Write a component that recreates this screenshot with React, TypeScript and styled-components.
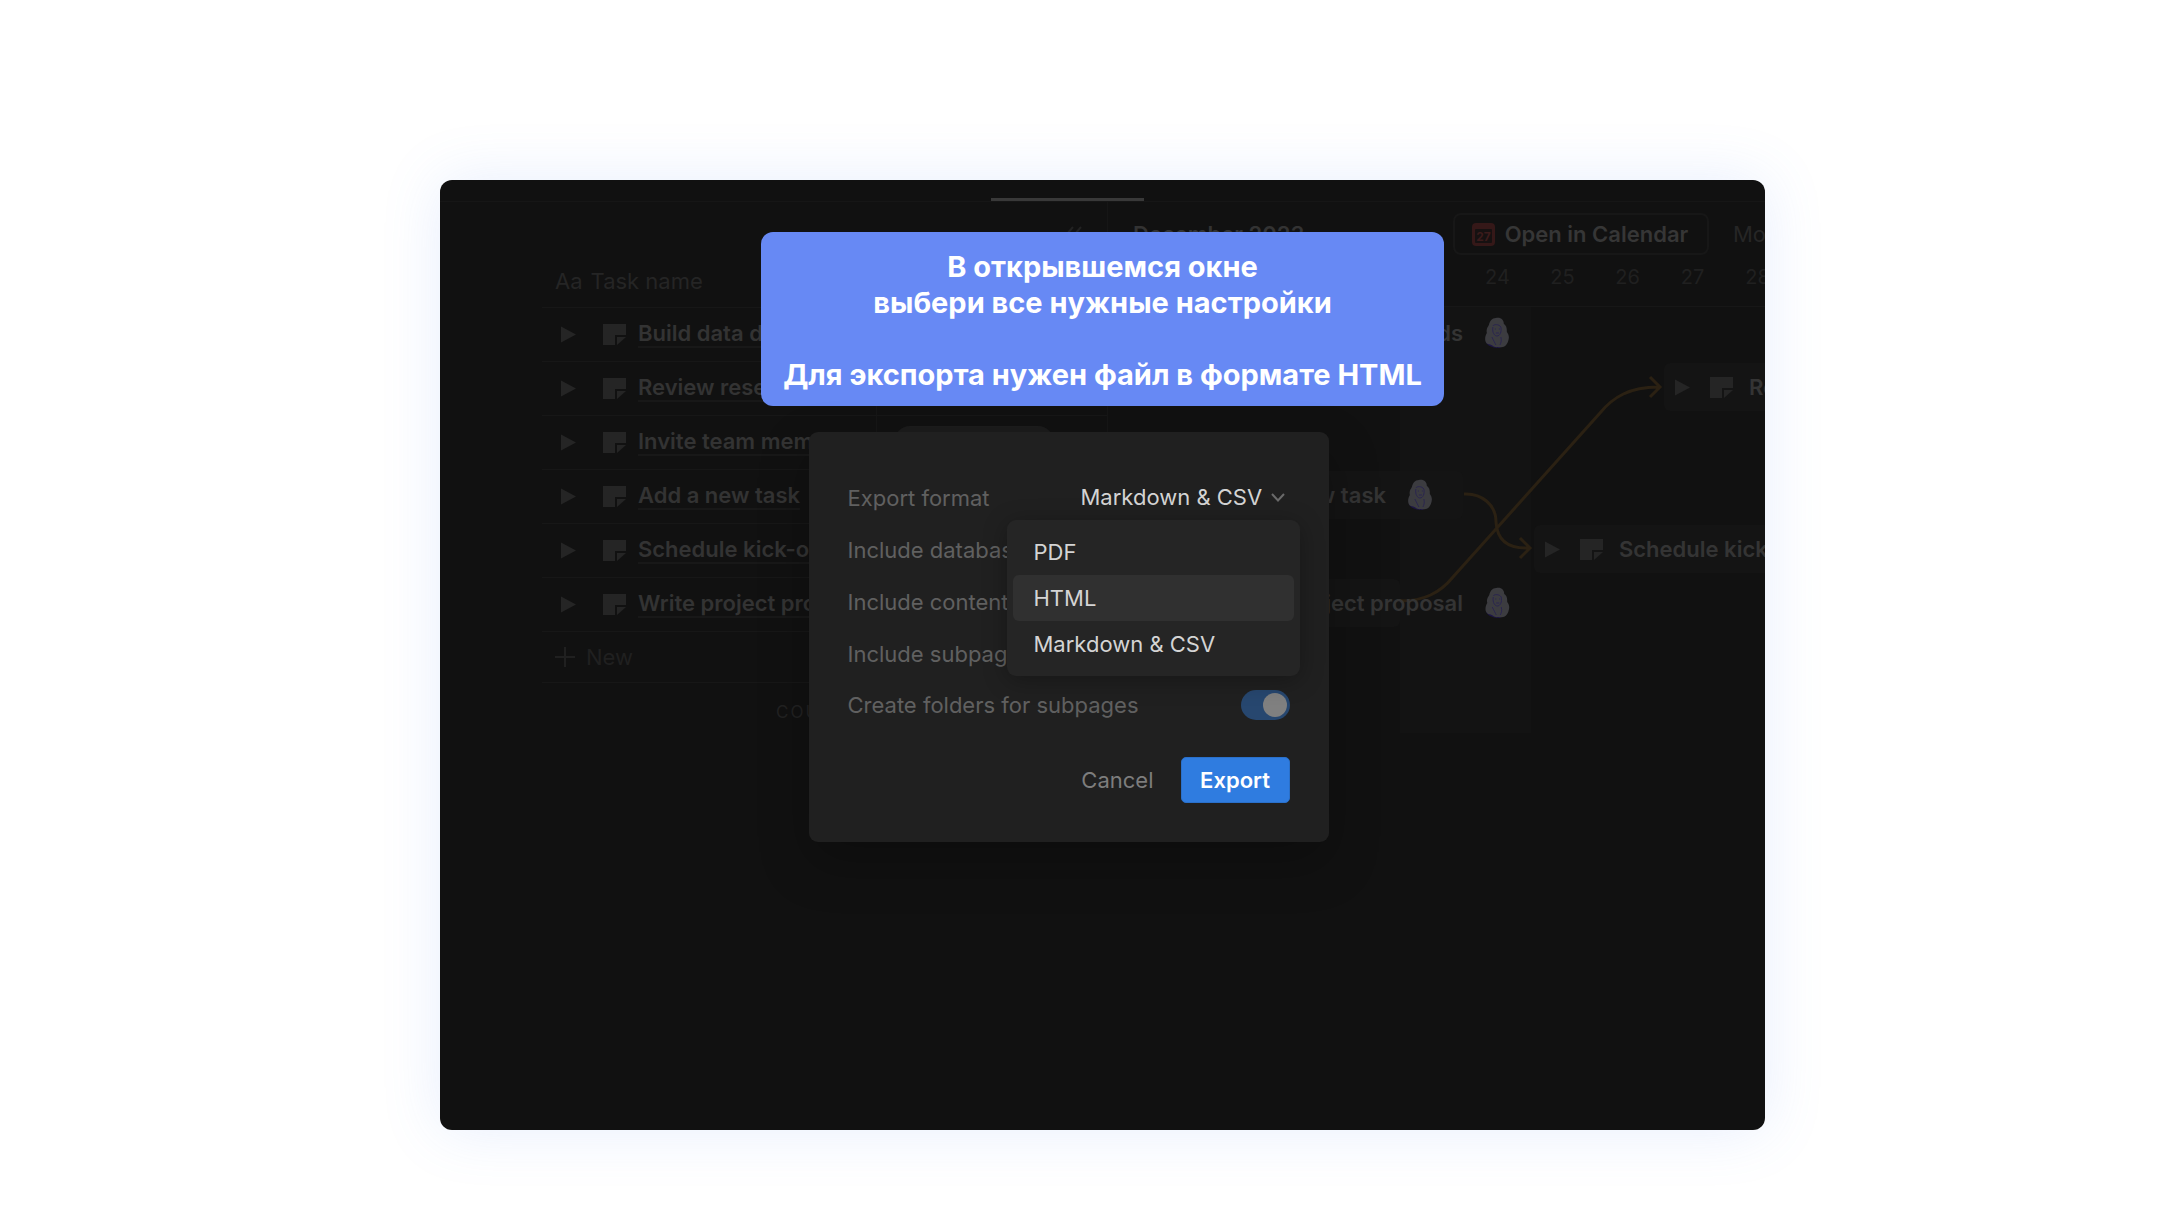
import React from "react";
import styled, { createGlobalStyle } from "styled-components";

const sans = `Inter, "Liberation Sans", sans-serif`;

const Global = createGlobalStyle`
  * { box-sizing: border-box; }
  body { margin: 0; background: #ffffff; font-family: ${sans}; }
  button, select, input { font: inherit; margin: 0; }
  svg { flex: none; }
`;

const Page = styled.div`
  display: flex;
  min-height: 100vh;
  padding: 180px 395px 94px 440px;
  background: #ffffff;
`;

const Frame = styled.div`
  position: relative;
  display: flex;
  flex: 1;
  min-width: 0;
  border-radius: 12px;
  box-shadow: 0 0 60px rgba(96, 142, 243, 0.15);
`;

const Board = styled.main`
  flex: 1;
  min-width: 0;
  overflow: hidden;
  border-radius: 12px;
  background: #111111;
  color: #333333;
  font-size: 22px;
  line-height: 28px;
`;

const TabBar = styled.div`
  display: flex;
  align-items: flex-end;
  height: 22px;
  padding-left: 551px;
  border-bottom: 1px solid #161616;
`;

const ActiveTab = styled.span`
  width: 153px;
  height: 3px;
  background: #393939;
`;

const Split = styled.div`
  display: grid;
  grid-template-columns: 668px minmax(0, 1fr);
`;

const Side = styled.section`
  padding-left: 102px;
  border-right: 1px solid #161616;
`;

const Toolbar = styled.div`
  display: flex;
  align-items: center;
  height: 54px;
  padding-top: 10px;
`;

const SideToolbar = styled(Toolbar)`
  justify-content: flex-end;
  padding-right: 24px;
`;

const TaskTable = styled.table`
  width: 100%;
  border-collapse: collapse;
  table-layout: fixed;
`;

const HeadCell = styled.th<{ $wide?: boolean }>`
  width: ${(p) => (p.$wide ? "334px" : "auto")};
  height: 51px;
  padding: 0 0 0 13px;
  border-bottom: 1px solid #171717;
  color: #252525;
  font-weight: 400;
  text-align: left;
`;

const HeadLabel = styled.span`
  display: flex;
  align-items: center;
  gap: 8px;
`;

const Cell = styled.td<{ $divided?: boolean }>`
  height: 54px;
  padding: 0 0 0 19px;
  border-bottom: 1px solid #171717;
  border-right: ${(p) => (p.$divided ? "1px solid #161616" : "0")};
`;

const TaskLine = styled.div`
  display: flex;
  align-items: center;
  white-space: nowrap;
  overflow: hidden;
`;

const TaskLink = styled.a`
  margin-left: 12px;
  border-bottom: 2px solid #181818;
  color: #333333;
  font-weight: 600;
  line-height: 26px;
  text-decoration: none;
`;

const Pill = styled.div`
  width: 160px;
  height: 32px;
  margin-left: -2px;
  border-radius: 16px;
  background: #1c1c1c;
`;

const NewButton = styled.button`
  display: flex;
  align-items: center;
  gap: 11px;
  width: 100%;
  height: 51px;
  padding: 0 0 0 13px;
  border: 0;
  border-bottom: 1px solid #171717;
  background: none;
  color: #202020;
`;

const Count = styled.div`
  padding-left: 234px;
  color: #222222;
  font-size: 17px;
  letter-spacing: 2px;
  line-height: 58px;
`;

const Timeline = styled.section`
  min-width: 0;
  overflow: hidden;
`;

const Month = styled.div`
  flex: 0 0 345px;
  padding-left: 25px;
  font-weight: 600;
`;

const CalendarButton = styled.button`
  display: flex;
  flex: none;
  align-items: center;
  justify-content: center;
  gap: 10px;
  width: 256px;
  height: 42px;
  padding: 0 2px 0 0;
  border: 2px solid #171717;
  border-radius: 8px;
  background: none;
  color: #363636;
  font-weight: 600;
`;

const ScaleButton = styled.button`
  flex: none;
  padding: 0 0 0 24px;
  border: 0;
  background: none;
  color: #262626;
`;

const Days = styled.div`
  display: flex;
  height: 51px;
  padding-left: 292px;
  border-bottom: 1px solid #171717;
`;

const Day = styled.span`
  flex: 0 0 65px;
  color: #202020;
  font-size: 20px;
  line-height: 42px;
  text-align: center;
`;

const Canvas = styled.div`
  position: relative;
  height: 426px;
`;

const Weekend = styled.div`
  position: absolute;
  top: 0;
  left: 292px;
  width: 131px;
  height: 100%;
  background: #131313;
`;

const Bar = styled.div<{ $left: number; $width: number; $row: number }>`
  position: absolute;
  top: ${(p) => p.$row * 54 + 2}px;
  left: ${(p) => p.$left}px;
  width: ${(p) => p.$width}px;
  height: 48px;
  border-radius: 6px;
  background: #141414;
`;

const BarContent = styled.div<{ $left: number; $end?: boolean; $row: number }>`
  position: absolute;
  top: ${(p) => p.$row * 54 + 2}px;
  left: ${(p) => p.$left}px;
  display: flex;
  align-items: center;
  height: 48px;
  color: #343434;
  font-weight: 600;
  white-space: nowrap;
  transform: ${(p) => (p.$end ? "translateX(-100%)" : "none")};
`;

const BarText = styled.span<{ $gap: number }>`
  margin: 0 ${(p) => p.$gap}px;
`;

const Indent = styled.span<{ $small?: boolean }>`
  flex: none;
  width: ${(p) => (p.$small ? "20px" : "27px")};
`;

const Arrows = styled.svg`
  position: absolute;
  top: 0;
  left: 0;
`;

const Overlay = styled.div`
  position: absolute;
  inset: 0;
  display: flex;
  flex-direction: column;
  align-items: center;
  padding-top: 52px;
`;

const Banner = styled.p`
  margin: 0;
  padding: 17px 22px 13px;
  border-radius: 12px;
  background: #6789f4;
  color: #ffffff;
  font-size: 29px;
  font-weight: 700;
  line-height: 36px;
  text-align: center;
  white-space: pre-line;
`;

const Dialog = styled.form`
  width: 520px;
  margin: 26px 68px 0 0;
  padding: 40px 39px 39px;
  border-radius: 9px;
  background: #202020;
  box-shadow: 0 20px 50px rgba(0, 0, 0, 0.25);
  color: #606060;
  font-size: 22px;
  line-height: 28px;
`;

const Field = styled.div`
  position: relative;
  display: flex;
  align-items: center;
  justify-content: space-between;
  height: 52px;
`;

const LastField = styled(Field)`
  height: 50px;
`;

const SelectWrap = styled.div`
  display: flex;
  align-items: center;
  gap: 8px;
  padding: 0 5px 2px 0;
`;

const Select = styled.select`
  appearance: none;
  padding: 0;
  border: 0;
  background: none;
  color: #d4d4d4;
  line-height: 28px;
`;

const Menu = styled.ul`
  position: absolute;
  z-index: 1;
  top: 48px;
  right: -10px;
  width: 293px;
  margin: 0;
  padding: 9px 6px;
  border-radius: 9px;
  background: #252525;
  box-shadow: 0 4px 24px rgba(0, 0, 0, 0.3);
  list-style: none;
`;

const Option = styled.button<{ $active?: boolean }>`
  display: block;
  width: 100%;
  height: 46px;
  padding: 0 21px;
  border: 0;
  border-radius: 6px;
  background: ${(p) => (p.$active ? "#303030" : "none")};
  color: #d4d4d4;
  text-align: left;
`;

const Switch = styled.input`
  appearance: none;
  display: flex;
  justify-content: flex-end;
  width: 49px;
  height: 30px;
  padding: 3px;
  border-radius: 15px;
  background: #27476f;
  &::before {
    content: "";
    width: 24px;
    height: 24px;
    border-radius: 50%;
    background: #808080;
  }
`;

const Actions = styled.div`
  display: flex;
  justify-content: flex-end;
  gap: 27px;
  margin-top: 27px;
`;

const Cancel = styled.button`
  padding: 0;
  border: 0;
  background: none;
  color: #7d7d7d;
`;

const Submit = styled.button`
  width: 109px;
  height: 46px;
  padding: 0;
  border: 1px solid #2a70ca;
  border-radius: 5px;
  background: #2f7ce0;
  color: #ffffff;
  font-weight: 600;
`;

const Caret = () => (
  <svg width="15" height="17" viewBox="0 0 15 17" aria-hidden="true">
    <path d="M0 0.500L15 8.500L0 16.500Z" fill="#252525" />
  </svg>
);

const NoteIcon = () => (
  <svg width="23" height="21" viewBox="0 0 23 21" aria-hidden="true">
    <path d="M0 0H23V11H12V21H0Z" fill="#252525" />
    <path d="M14 13H23L14 21Z" fill="#252525" />
  </svg>
);

const Avatar = () => (
  <svg width="26" height="32" viewBox="0 0 26 32" aria-hidden="true">
    <path d="M2 24C2 28 8 31 15 31L20 29L8 22Z" fill="#1d1546" />
    <path
      d="M12 1C17 0 20 3 20 7C23 9 23 12 23 15C26 19 25 22 24 25C22 30 18 31 14 30C10 31 8 27 4 27C0 25 1 19 3 16C2 12 4 10 5 8C6 4 8 1 12 1Z"
      fill="#3c3c40"
    />
    <path
      d="M9 9C10 7 15 7 17 10M9 10C8 16 11 19 13 19C16 19 18 15 17 10M11 12H12M15 12H16M12 16H15M8 20C10 24 11 26 12 28M17 20C18 24 17 26 16 28"
      fill="none"
      stroke="#2a2550"
      strokeWidth="1"
    />
  </svg>
);

const CalendarIcon = () => (
  <svg width="23" height="23" viewBox="0 0 23 23" aria-hidden="true">
    <rect width="23" height="23" rx="4" fill="#351818" />
    <rect x="3" y="6" width="17" height="14" rx="1" fill="#161111" />
    <text x="11.500" y="18" textAnchor="middle" fontFamily="Inter, sans-serif" fontSize="12" fontWeight="700" fill="#3c1b1b">
      27
    </text>
  </svg>
);

const tasks = [
  "Build data dashboards",
  "Review research results",
  "Invite team members",
  "Add a new task",
  "Schedule kick-off",
  "Write project proposal",
];

const days = [23, 24, 25, 26, 27, 28];
const formats = ["PDF", "HTML", "Markdown & CSV"];

export default function App() {
  return (
    <>
      <Global />
      <Page>
        <Frame>
          <Board>
            <TabBar>
              <ActiveTab />
            </TabBar>
            <Split>
              <Side>
                <SideToolbar>
                  <svg width="18" height="16" viewBox="0 0 18 16" aria-hidden="true">
                    <path d="M8 1L2 8L8 15M16 1L10 8L16 15" fill="none" stroke="#222222" strokeWidth="2" />
                  </svg>
                </SideToolbar>
                <TaskTable>
                  <thead>
                    <tr>
                      <HeadCell $wide>
                        <HeadLabel>
                          <span>Aa</span>
                          <span>Task name</span>
                        </HeadLabel>
                      </HeadCell>
                      <HeadCell />
                    </tr>
                  </thead>
                  <tbody>
                    {tasks.map((task, i) => (
                      <tr key={task}>
                        <Cell $divided>
                          <TaskLine>
                            <Caret />
                            <Indent />
                            <NoteIcon />
                            <TaskLink href="#">{task}</TaskLink>
                          </TaskLine>
                        </Cell>
                        <Cell>{i === 2 && <Pill />}</Cell>
                      </tr>
                    ))}
                  </tbody>
                </TaskTable>
                <NewButton type="button">
                  <svg width="20" height="20" viewBox="0 0 20 20" aria-hidden="true">
                    <path d="M10 0V20M0 10H20" stroke="#202020" strokeWidth="2" />
                  </svg>
                  New
                </NewButton>
                <Count>COUNT</Count>
              </Side>
              <Timeline>
                <Toolbar>
                  <Month>December 2023</Month>
                  <CalendarButton type="button">
                    <CalendarIcon />
                    Open in Calendar
                  </CalendarButton>
                  <ScaleButton type="button">Month</ScaleButton>
                </Toolbar>
                <Days>
                  {days.map((d) => (
                    <Day key={d}>{d}</Day>
                  ))}
                </Days>
                <Canvas>
                  <Weekend />
                  <Bar $left={556} $width={400} $row={1} />
                  <Bar $left={40} $width={315} $row={3} />
                  <Bar $left={426} $width={400} $row={4} />
                  <Bar $left={40} $width={252} $row={5} />
                  <Arrows width="657" height="426" viewBox="1108 307 657 426" aria-hidden="true">
                    <g fill="none" stroke="#2b2113" strokeWidth="3">
                      <path d="M1400 601C1424 601 1440 593 1453 577L1600 413C1613 397 1630 387 1658 387M1650 377L1660 387L1650 397" />
                      <path d="M1464 494C1482 493 1496 505 1496 522C1497 540 1508 549 1529 548M1520 538L1530 548L1520 558" />
                    </g>
                  </Arrows>
                  <BarContent $left={402} $end $row={0}>
                    <BarText $gap={21}>Build data dashboards</BarText>
                    <Avatar />
                  </BarContent>
                  <BarContent $left={567} $row={1}>
                    <Caret />
                    <Indent $small />
                    <NoteIcon />
                    <BarText $gap={16}>Review research results</BarText>
                  </BarContent>
                  <BarContent $left={325} $end $row={3}>
                    <BarText $gap={21}>Add a new task</BarText>
                    <Avatar />
                  </BarContent>
                  <BarContent $left={437} $row={4}>
                    <Caret />
                    <Indent $small />
                    <NoteIcon />
                    <BarText $gap={16}>Schedule kick-off</BarText>
                  </BarContent>
                  <BarContent $left={402} $end $row={5}>
                    <BarText $gap={21}>Write project proposal</BarText>
                    <Avatar />
                  </BarContent>
                </Canvas>
              </Timeline>
            </Split>
          </Board>
          <Overlay>
            <Banner>
              {"В открывшемся окне\nвыбери все нужные настройки\n\nДля экспорта нужен файл в формате HTML"}
            </Banner>
            <Dialog>
              <Field>
                <label htmlFor="format">Export format</label>
                <SelectWrap>
                  <Select id="format" defaultValue="Markdown & CSV">
                    {formats.map((f) => (
                      <option key={f}>{f}</option>
                    ))}
                  </Select>
                  <svg width="14" height="9" viewBox="0 0 14 9" aria-hidden="true">
                    <path d="M1 1L7 7.500L13 1" fill="none" stroke="#6a6a6a" strokeWidth="2" />
                  </svg>
                </SelectWrap>
                <Menu>
                  {formats.map((f) => (
                    <li key={f}>
                      <Option type="button" $active={f === "HTML"}>
                        {f}
                      </Option>
                    </li>
                  ))}
                </Menu>
              </Field>
              <Field>Include databases</Field>
              <Field>Include content</Field>
              <Field>Include subpages</Field>
              <LastField>
                <label htmlFor="folders">Create folders for subpages</label>
                <Switch id="folders" type="checkbox" role="switch" defaultChecked />
              </LastField>
              <Actions>
                <Cancel type="button">Cancel</Cancel>
                <Submit type="button">Export</Submit>
              </Actions>
            </Dialog>
          </Overlay>
        </Frame>
      </Page>
    </>
  );
}
